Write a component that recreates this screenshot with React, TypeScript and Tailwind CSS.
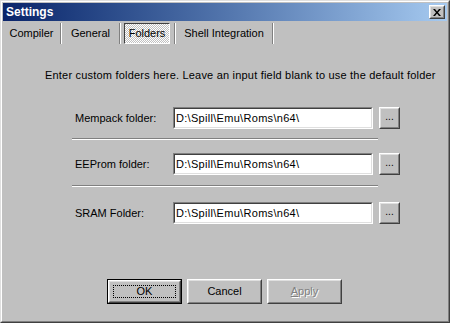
import React from 'react'

const font = "font-['Liberation_Sans',Arial,sans-serif]"

function Raised({ children, className = '' }: { children?: React.ReactNode; className?: string }) {
  return (
    <div className={`border border-t-white border-l-white border-r-[#404040] border-b-[#404040] ${className}`}>
      <div className="w-full h-full border border-t-[#dfdfdf] border-l-[#dfdfdf] border-r-[#808080] border-b-[#808080] flex items-center justify-center">
        {children}
      </div>
    </div>
  )
}

function Separator({ className = '' }: { className?: string }) {
  return <div className={`h-[2px] border-t border-t-[#808080] border-b border-b-white ${className}`} />
}

function VSep() {
  return <div className="w-[2px] h-[21px] border-l border-l-[#808080] border-r border-r-white" />
}

function FolderRow({ label }: { label: string }) {
  return (
    <div className="flex items-center h-[22px] pl-[72px]">
      <span className="w-[98px] text-[11px] text-black">{label}</span>
      <div className="w-[200px] h-[22px] border border-t-[#808080] border-l-[#808080] border-r-white border-b-white">
        <div className="w-full h-full border border-t-[#404040] border-l-[#404040] border-r-[#dfdfdf] border-b-[#dfdfdf] bg-white flex items-center pl-[1px] text-[11px] tracking-[0.3px] text-black">
          D:\Spill\Emu\Roms\n64\
        </div>
      </div>
      <Raised className="ml-[6px] w-[21px] h-[22px]">
        <span className="text-[10px] leading-none text-black -mt-[2px]">...</span>
      </Raised>
    </div>
  )
}

export default function App() {
  return (
    <div className={`w-[450px] h-[323px] bg-[#c0c0c0] border border-t-[#dfdfdf] border-l-[#dfdfdf] border-r-[#404040] border-b-[#404040] ${font}`}>
      <div className="w-full h-full border border-t-white border-l-white border-r-[#808080] border-b-[#808080] p-px flex flex-col">
        {/* title bar */}
        <div className="h-[18px] flex items-center justify-between bg-gradient-to-r from-[#0a246a] to-[#a6caf0] pl-[3px] pr-[2px]">
          <span className="text-white font-bold text-[12px] leading-none">Settings</span>
          <Raised className="w-[16px] h-[14px] bg-[#c0c0c0]">
            <svg width="8" height="7" viewBox="0 0 8 7">
              <path d="M0 0h2l2 2.5L6 0h2L5 3.5 8 7H6L4 4.5 2 7H0l3-3.5z" fill="#000" />
            </svg>
          </Raised>
        </div>

        {/* tabs */}
        <div className="flex items-center h-[24px] text-[11px] text-black">
          <div className="w-[57px] text-center">Compiler</div>
          <VSep />
          <div className="w-[57px] text-center">General</div>
          <VSep />
          <div className="ml-[3px] w-[46px] h-[21px] border border-t-[#404040] border-l-[#404040] border-r-white border-b-white bg-[repeating-conic-gradient(#ffffff_0_25%,#c0c0c0_0_50%)] bg-[length:2px_2px] flex items-center justify-center">
            Folders
          </div>
          <div className="ml-[4px]" />
          <VSep />
          <div className="w-[96px] text-center">Shell Integration</div>
          <VSep />
        </div>

        <p className="mt-[24px] pl-[42px] text-[11px] leading-[13px] tracking-[0.2px] text-black whitespace-nowrap">
          Enter custom folders here. Leave an input field blank to use the default folder
        </p>

        <div className="mt-[25px]">
          <FolderRow label="Mempack folder:" />
          <Separator className="mt-[9px] ml-[69px] w-[306px]" />
          <div className="mt-[13px]">
            <FolderRow label="EEProm folder:" />
          </div>
          <Separator className="mt-[10px] ml-[69px] w-[306px]" />
          <div className="mt-[15px]">
            <FolderRow label="SRAM Folder:" />
          </div>
        </div>

        <div className="mt-[55px] pl-[104px] flex gap-[5px] text-[11px]">
          <div className="w-[75px] h-[25px] border border-black">
            <Raised className="w-full h-full">
              <div className="w-[calc(100%-6px)] h-[calc(100%-6px)] border border-dotted border-black flex items-center justify-center text-black">
                OK
              </div>
            </Raised>
          </div>
          <Raised className="w-[75px] h-[25px]">
            <span className="text-black">Cancel</span>
          </Raised>
          <Raised className="w-[75px] h-[25px]">
            <span className="text-[#808080] [text-shadow:1px_1px_0_#ffffff]">
              <span className="underline">A</span>pply
            </span>
          </Raised>
        </div>
      </div>
    </div>
  )
}
